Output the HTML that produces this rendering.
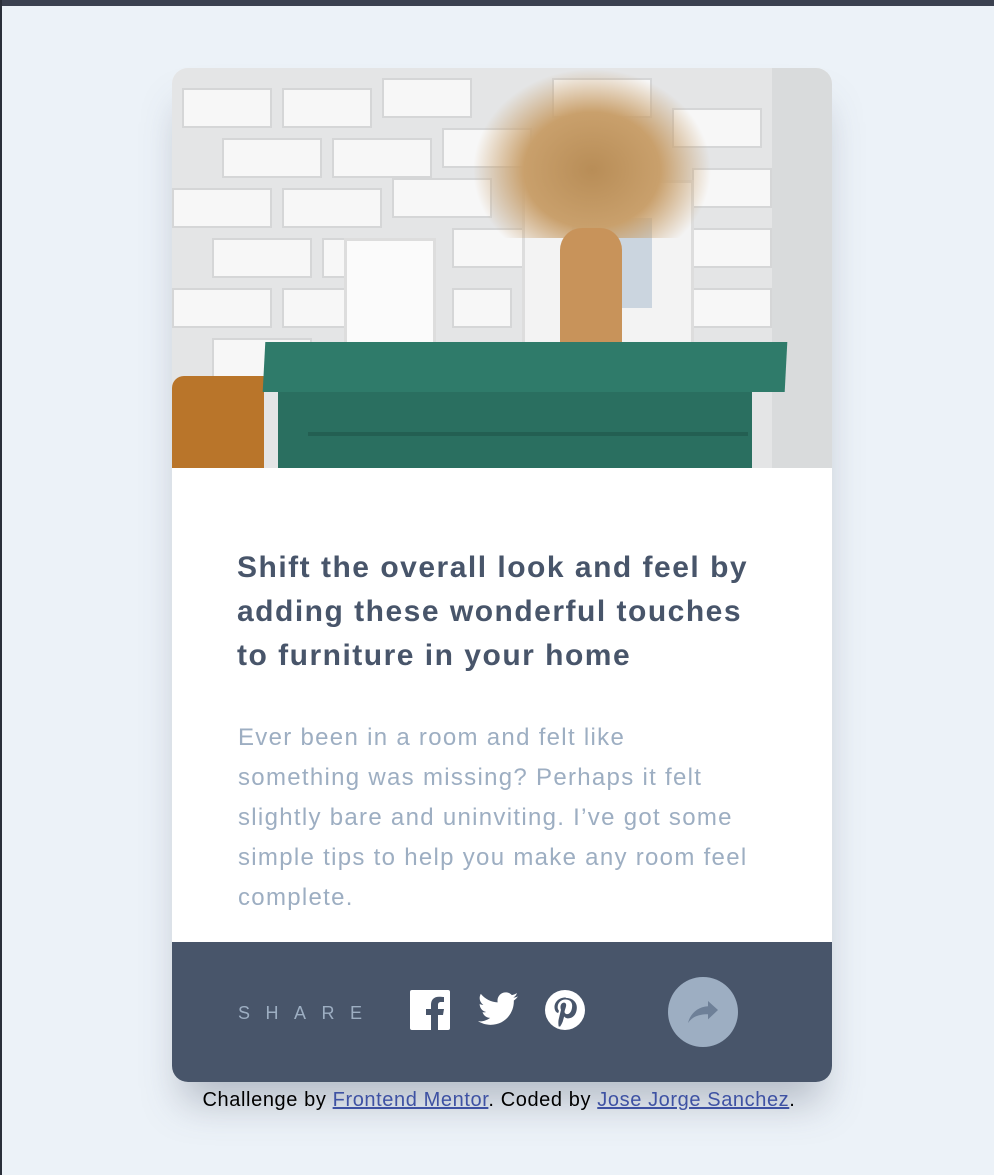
<!DOCTYPE html>
<html><head><meta charset="utf-8"><style>
*{margin:0;padding:0;box-sizing:border-box}
html,body{width:994px;height:1175px;overflow:hidden}
body{background:#ECF2F8;font-family:"Liberation Sans",sans-serif;position:relative;border-left:2px solid #2a2f3a}
.top{position:absolute;left:0;top:0;width:994px;height:6px;background:#3b4150}
.card{position:absolute;left:170px;top:68px;width:660px;height:1014px;background:#fff;border-radius:16px;overflow:hidden;box-shadow:0 30px 40px -10px rgba(80,90,110,.35)}
.img{position:absolute;left:0;top:0;width:660px;height:400px;background:#ecedee;overflow:hidden}
.brick{position:absolute;background:#f7f7f7;border:2px solid #d5d6d7}
h1{position:absolute;left:65px;top:478px;width:600px;font-size:30px;line-height:44px;color:#48556A;font-weight:bold;letter-spacing:1.5px;white-space:nowrap}
p{position:absolute;left:66px;top:650px;width:600px;font-size:24px;line-height:40px;color:#9DAEC2;letter-spacing:1.3px;white-space:nowrap}
.foot{position:absolute;left:0;top:874px;width:660px;height:140px;background:#48556A}
.share{position:absolute;left:66px;top:61px;color:#9DAEC2;font-size:18px;letter-spacing:15.5px}
.btn{position:absolute;left:496px;top:35px;width:70px;height:70px;border-radius:50%;background:#9DAEC2}
.credit{position:absolute;top:1089px;left:0;width:994px;text-align:center;font-size:20px;color:#000;letter-spacing:.6px}
.credit a{color:#3e52a3;text-decoration:underline}
</style></head><body>
<div class="top"></div>
<div class="card">
 <div class="img">
  <div style="position:absolute;left:0;top:0;width:600px;height:400px;background:#e4e5e6"></div>
  <div class="brick" style="left:10px;top:20px;width:90px;height:40px"></div>
  <div class="brick" style="left:110px;top:20px;width:90px;height:40px"></div>
  <div class="brick" style="left:210px;top:10px;width:90px;height:40px"></div>
  <div class="brick" style="left:50px;top:70px;width:100px;height:40px"></div>
  <div class="brick" style="left:160px;top:70px;width:100px;height:40px"></div>
  <div class="brick" style="left:270px;top:60px;width:90px;height:40px"></div>
  <div class="brick" style="left:0px;top:120px;width:100px;height:40px"></div>
  <div class="brick" style="left:110px;top:120px;width:100px;height:40px"></div>
  <div class="brick" style="left:220px;top:110px;width:100px;height:40px"></div>
  <div class="brick" style="left:40px;top:170px;width:100px;height:40px"></div>
  <div class="brick" style="left:150px;top:170px;width:100px;height:40px"></div>
  <div class="brick" style="left:0;top:220px;width:100px;height:40px"></div>
  <div class="brick" style="left:110px;top:220px;width:100px;height:40px"></div>
  <div class="brick" style="left:40px;top:270px;width:100px;height:40px"></div>
  <div class="brick" style="left:380px;top:10px;width:100px;height:40px"></div>
  <div class="brick" style="left:500px;top:40px;width:90px;height:40px"></div>
  <div class="brick" style="left:520px;top:100px;width:80px;height:40px"></div>
  <div class="brick" style="left:520px;top:160px;width:80px;height:40px"></div>
  <div class="brick" style="left:520px;top:220px;width:80px;height:40px"></div>
  <div class="brick" style="left:280px;top:160px;width:100px;height:40px"></div>
  <div class="brick" style="left:280px;top:220px;width:60px;height:40px"></div>
  <div style="position:absolute;left:600px;top:0;width:60px;height:400px;background:#d9dbdc"></div>
  <div style="position:absolute;left:172px;top:170px;width:92px;height:116px;background:#fbfbfb;border:3px solid #ddd"></div>
  <div style="position:absolute;left:350px;top:112px;width:172px;height:168px;background:#f3f3f3;border:3px solid #ddd"></div>
  <div style="position:absolute;left:400px;top:150px;width:80px;height:90px;background:#b9c7d6;opacity:.7"></div>
  <div style="position:absolute;left:300px;top:0;width:240px;height:170px;background:radial-gradient(ellipse at 50% 60%,#b88d57 0,#c9a06c 40%,transparent 70%)"></div>
  <div style="position:absolute;left:388px;top:160px;width:62px;height:154px;background:#c8935a;border-radius:22px 22px 6px 6px"></div>
  <div style="position:absolute;left:0;top:308px;width:92px;height:92px;background:#b9752a;border-radius:12px 0 0 0"></div>
  <div style="position:absolute;left:92px;top:274px;width:522px;height:50px;background:#2f7b6a;transform:skewX(-3deg)"></div>
  <div style="position:absolute;left:106px;top:324px;width:474px;height:76px;background:#2a6f60"></div>
  <div style="position:absolute;left:136px;top:364px;width:440px;height:4px;background:#235f52"></div>
 </div>
 <h1>Shift the overall look and feel by<br>adding these wonderful touches<br>to furniture in your home</h1>
 <p>Ever been in a room and felt like<br>something was missing? Perhaps it felt<br>slightly bare and uninviting. I’ve got some<br>simple tips to help you make any room feel<br>complete.</p>
 <div class="foot">
  <div class="share">SHARE</div>
  <svg style="position:absolute;left:238px;top:48px" width="40" height="40" viewBox="0 0 40 40"><rect width="40" height="40" rx="2" fill="#fff"/><path d="M28 40V25h5l1-6h-6v-4c0-2 1-3 3-3h3V7c-1 0-3-.3-5-.3-5 0-8 3-8 8V19h-5v6h5v15z" fill="#48556A"/></svg>
  <svg style="position:absolute;left:306px;top:50px" width="40" height="34" viewBox="0 0 24 20"><path fill="#fff" d="M24 2.4c-.9.4-1.8.7-2.8.8 1-.6 1.8-1.6 2.2-2.7-1 .6-2 1-3.1 1.2C19.3.6 18 0 16.6 0c-2.7 0-4.9 2.2-4.9 4.9 0 .4 0 .8.1 1.1C7.7 5.8 4.1 3.9 1.7.9c-.4.7-.7 1.6-.7 2.5 0 1.7.9 3.2 2.2 4.1-.8 0-1.6-.2-2.2-.6v.1c0 2.4 1.7 4.4 3.9 4.8-.4.1-.8.2-1.3.2-.3 0-.6 0-.9-.1.6 2 2.4 3.4 4.6 3.4-1.7 1.3-3.8 2.1-6.1 2.1-.4 0-.8 0-1.2-.1 2.2 1.4 4.8 2.2 7.5 2.2 9.1 0 14-7.5 14-14v-.6c1-.7 1.8-1.6 2.5-2.5z"/></svg>
  <svg style="position:absolute;left:373px;top:48px" width="40" height="40" viewBox="0 0 24 24"><circle cx="12" cy="12" r="12" fill="#fff"/><path fill="#48556A" d="M12.3 4.5c-4.4 0-6.6 3.1-6.6 5.7 0 1.6.6 3 1.9 3.5.2.1.4 0 .5-.2l.2-.8c.1-.2 0-.3-.1-.5-.4-.5-.6-1.1-.6-1.9 0-2.4 1.8-4.6 4.7-4.6 2.6 0 4 1.6 4 3.7 0 2.8-1.2 5.1-3 5.1-1 0-1.8-.8-1.5-1.9.3-1.2.9-2.6.9-3.5 0-.8-.4-1.5-1.4-1.5-1.1 0-2 1.1-2 2.7 0 1 .3 1.6.3 1.6l-1.4 5.7c-.3 1.3-.2 3.1 0 4.3h.9c.4-.6 1.4-2.2 1.7-3.5l.7-2.6c.3.6 1.3 1.2 2.4 1.2 3.1 0 5.2-2.8 5.2-6.6 0-2.9-2.4-5.6-6.2-5.6z"/></svg>
  <div class="btn"><svg style="position:absolute;left:20px;top:24px" width="30" height="22" viewBox="0 0 15 11"><path fill="#6E8098" d="M15 4.5 10 0v2.6C4 3 1 7 0 11c2-3 5-4.4 10-4.4V9.2z"/></svg></div>
 </div>
</div>
<div class="credit">Challenge by <a>Frontend Mentor</a>. Coded by <a>Jose Jorge Sanchez</a>.</div>
</body></html>
